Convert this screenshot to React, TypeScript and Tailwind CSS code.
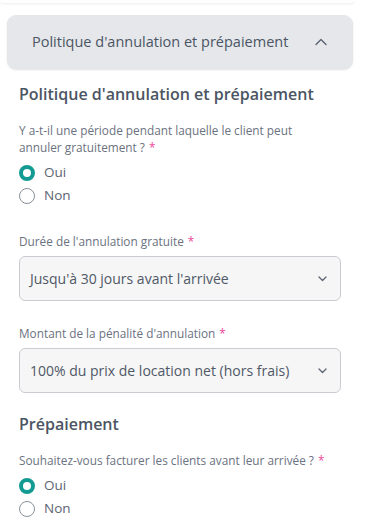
import React from "react";

const Star = () => <span className="text-[#ec4899] ml-[4px]">*</span>;

function Radio({ checked, label }: { checked?: boolean; label: string }) {
  return (
    <div className="flex items-center h-[23px]">
      <span
        className={
          checked
            ? "w-[16px] h-[16px] rounded-full border-[4px] border-[#139b93] bg-white box-border"
            : "w-[16px] h-[16px] rounded-full border border-[#8a919b] bg-white box-border"
        }
      />
      <span className="ml-[9px] text-[13.5px] text-[#5b6472] leading-none">{label}</span>
    </div>
  );
}

function Select({ value }: { value: string }) {
  return (
    <div className="flex items-center justify-between h-[45px] rounded-[6px] border border-[#c9ccd1] bg-[#f6f6f6] pl-[10px] pr-[13px]">
      <span className="text-[14px] text-[#4f5866]">{value}</span>
      <svg width="9" height="6" viewBox="0 0 9 6" fill="none">
        <path d="M1 1l3.5 3.5L8 1" stroke="#5b6472" strokeWidth="1.3" strokeLinecap="round" strokeLinejoin="round" />
      </svg>
    </div>
  );
}

export default function App() {
  return (
    <div className="w-[366px] h-[527px] bg-white overflow-hidden" style={{ fontFamily: '"Open Sans", "Noto Sans", sans-serif' }}>
      <div className="h-[3px] mr-[12px] bg-white rounded-b-md shadow-[0_1px_3px_rgba(0,0,0,0.08)]" />
      <div className="ml-[7px] mr-[13px] mt-[12px] h-[54px] rounded-[9px] bg-[#e5e7eb] shadow-[0_1px_2px_rgba(0,0,0,0.12)] flex items-center pl-[25px] pr-[26px] justify-between">
        <span className="text-[14.5px] font-medium text-[#4b5563]">Politique d'annulation et prépaiement</span>
        <svg width="12" height="8" viewBox="0 0 12 8" fill="none">
          <path d="M1 6.5L6 1.5l5 5" stroke="#5b6472" strokeWidth="1.4" strokeLinecap="round" strokeLinejoin="round" />
        </svg>
      </div>
      <div className="px-[19px]">
        <h2 className="mt-[15px] text-[16px] leading-[20px] font-semibold text-[#4b5563]">
          Politique d'annulation et prépaiement
        </h2>
        <p className="mt-[18px] text-[11.8px] leading-[17px] text-[#6b7280] pr-[30px]">
          Y a-t-il une période pendant laquelle le client peut annuler gratuitement ?<Star />
        </p>
        <div className="mt-[5px]">
          <Radio checked label="Oui" />
          <Radio label="Non" />
        </div>
        <p className="mt-[26px] text-[11.8px] leading-[17px] text-[#6b7280]">
          Durée de l'annulation gratuite<Star />
        </p>
        <div className="mt-[6px] mr-[6px]">
          <Select value="Jusqu'à 30 jours avant l'arrivée" />
        </div>
        <p className="mt-[24px] text-[11.8px] leading-[17px] text-[#6b7280]">
          Montant de la pénalité d'annulation<Star />
        </p>
        <div className="mt-[6px] mr-[6px]">
          <Select value="100% du prix de location net (hors frais)" />
        </div>
        <h2 className="mt-[21px] text-[16px] leading-[20px] font-semibold text-[#4b5563]">Prépaiement</h2>
        <p className="mt-[18px] text-[11.8px] leading-[17px] text-[#6b7280]">
          Souhaitez-vous facturer les clients avant leur arrivée ?<Star />
        </p>
        <div className="mt-[5px]">
          <Radio checked label="Oui" />
          <Radio label="Non" />
        </div>
      </div>
    </div>
  );
}
